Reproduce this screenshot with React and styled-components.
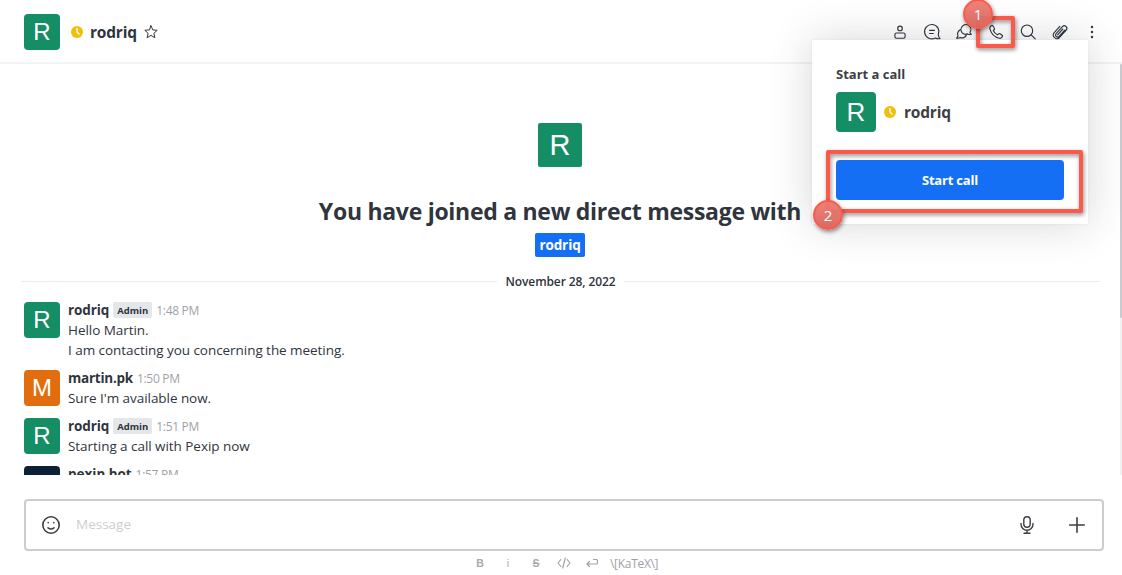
import React from 'react';
import styled, { createGlobalStyle } from 'styled-components';

const Global = createGlobalStyle`
  * { box-sizing: border-box; }
  body { margin: 0; background: #fff; overflow: hidden; }
`;

const Page = styled.div`
  position: relative;
  width: 1122px;
  height: 575px;
  overflow: hidden;
  display: flex;
  flex-direction: column;
  background: #fff;
  color: #2f343d;
  font-family: "Open Sans", "Noto Sans", sans-serif;
  font-size: 14px;
  line-height: 20px;
  white-space: nowrap;
`;

const Text = styled.span`
  font-size: ${p => p.$size || 13.5}px;
  font-weight: ${p => p.$weight || 400};
  color: ${p => p.$color || 'inherit'};
  letter-spacing: ${p => p.$track || 0}px;
`;

const Header = styled.header`
  flex: none;
  height: 64px;
  padding: 2px 20px 0 24px;
  display: flex;
  align-items: center;
  border-bottom: 2px solid #f2f3f5;
`;

const Avatar = styled.div`
  flex: none;
  display: flex;
  align-items: center;
  justify-content: center;
  width: ${p => p.$size}px;
  height: ${p => p.$size}px;
  border-radius: ${p => p.$radius || 4}px;
  background: ${p => p.$bg || '#158d65'};
  color: #fff;
  font-family: "Liberation Sans", Arial, sans-serif;
  font-size: ${p => p.$font || 24}px;
  line-height: 1;
`;

const RoomTitle = styled.div`
  flex: 1;
  display: flex;
  align-items: center;
  margin-left: 11px;
  svg { flex: none; }
  ${Text} { margin: 0 7px; }
`;

const Actions = styled.nav`
  display: flex;
  gap: 12px;
`;

const Icon = styled.svg.attrs({ fill: 'none', strokeLinecap: 'round', strokeLinejoin: 'round' })`
  display: block;
  flex: none;
  width: ${p => p.$size || 20}px;
  height: ${p => p.$size || 20}px;
  stroke: ${p => p.$color || '#2f343d'};
  stroke-width: ${p => p.$stroke || 1.15};
`;

const Feed = styled.main`
  flex: none;
  height: 411px;
  display: flex;
  overflow: hidden;
`;

const FeedContent = styled.div`
  width: 1120px;
  height: 411px;
  overflow: hidden;
`;

const Scrollbar = styled.div`
  width: 2px;
  background: #f1f1f1;
  &::before { content: ""; display: block; height: 254px; background: #c9cbcf; border-radius: 1px; }
`;

const Intro = styled.section`
  display: flex;
  flex-direction: column;
  align-items: center;
  padding-top: 59px;
`;

const IntroTitle = styled.h2`
  margin: 28px 0 0;
  line-height: 32px;
  font-size: 24px;
`;

const Mention = styled.div`
  margin-top: 6px;
  height: 24px;
  width: 50px;
  display: flex;
  align-items: center;
  justify-content: center;
  border-radius: 2px;
  background: #156ff5;
  color: #fff;
`;

const DateDivider = styled.div`
  display: flex;
  align-items: center;
  justify-content: center;
  gap: 8px;
  height: 20px;
  margin: 14px 20px 9px 21px;
  &::before, &::after { content: ""; flex: 1; height: 1px; background: #ebecef; }
  ${Text} { width: 111px; text-align: center; padding-top: 2px; }
`;

const Message = styled.article`
  display: flex;
  align-items: flex-start;
  padding-left: 24px;
  margin-bottom: 8px;
  & > ${Avatar} { margin-top: 2px; }
`;

const MessageBody = styled.div`
  margin-left: 8px;
`;

const MessageHead = styled.div`
  display: flex;
  align-items: center;
  height: 20px;
  gap: 4px;
`;

const Time = styled(Text)`
  margin-top: 2px;
`;

const Line = styled.div`
  height: 20px;
`;

const Role = styled.span`
  display: flex;
  align-items: center;
  justify-content: center;
  height: 16px;
  width: 39px;
  border-radius: 2px;
  background: #e4e7ea;
  ${Text} { padding-top: 1px; }
`;

const Composer = styled.div`
  flex: none;
  display: flex;
  align-items: center;
  margin: 24px 18px 0 24px;
  height: 52px;
  border: 2px solid #cbced1;
  border-radius: 4px;
  padding: 0 15px;
  & > ${Text} { flex: 1; margin: 0 0 2px 15px; }
  & > svg:last-child { margin-left: 30px; }
`;

const Hints = styled.div`
  display: flex;
  align-items: center;
  height: 24px;
  padding-left: 472px;
  & > svg { margin-right: 12px; }
  & > ${Text} { margin-left: -2px; padding-top: 2px; }
`;

const Hint = styled.span`
  width: 16px;
  margin-right: 12px;
  text-align: center;
  font: ${p => p.$weight || 700} 10.5px "Liberation Sans", Arial, sans-serif;
  line-height: 16px;
  color: #a6aab0;
  text-decoration: ${p => (p.$strike ? 'line-through' : 'none')};
`;

const CallPopup = styled.aside`
  position: absolute;
  left: 812px;
  top: 40px;
  width: 276px;
  height: 184px;
  padding: 24px;
  display: flex;
  flex-direction: column;
  background: #fff;
  box-shadow: 0 0 40px rgba(47, 52, 61, 0.2), 0 0 2px rgba(47, 52, 61, 0.08);
`;

const Callee = styled.div`
  display: flex;
  align-items: center;
  margin: 8px 0 28px;
  svg { margin: 0 8px; }
`;

const CallButton = styled.button`
  height: 40px;
  border: 0;
  padding: 0;
  border-radius: 4px;
  background: #156ff5;
  color: #fff;
  font-family: inherit;
`;

const Highlight = styled.div`
  position: absolute;
  left: ${p => p.$x}px;
  top: ${p => p.$y}px;
  width: ${p => p.$w}px;
  height: ${p => p.$h}px;
  border: 4px solid #fb5a4b;
  border-radius: 2px;
  filter: drop-shadow(1px 2px 2px rgba(0, 0, 0, 0.45));
`;

const Step = styled.div`
  position: absolute;
  left: ${p => p.$x}px;
  top: ${p => p.$y}px;
  width: 30px;
  height: 30px;
  display: flex;
  align-items: center;
  justify-content: center;
  padding-bottom: 1px;
  border: 2px solid #fb5a4b;
  border-radius: 50%;
  background: linear-gradient(rgba(236, 124, 115, 0.96), rgba(219, 101, 92, 0.96));
  color: #fff;
  font-size: 15px;
  box-shadow: 1px 2px 4px rgba(0, 0, 0, 0.45);
`;

const Away = () => (
  <Icon viewBox="0 0 12 12" $size={12} $color="#fff" $stroke={1.5}>
    <circle cx="6" cy="6" r="6" fill="#f3be08" stroke="none" />
    <path d="M6 2.8V6l2 2" />
  </Icon>
);

const RoomActions = () => (
  <Actions>
    <Icon viewBox="0 0 20 20">
      <circle cx="10" cy="6.400" r="2.300" />
      <path d="M6.500 11h7a1.600 1.600 0 0 1 1.600 1.600v2a1.600 1.600 0 0 1-1.600 1.600h-7a1.600 1.600 0 0 1-1.600-1.600v-2a1.600 1.600 0 0 1 1.600-1.600z" />
    </Icon>
    <Icon viewBox="0 0 20 20">
      <path d="M16.300 12.700a7.200 7.200 0 1 0-2.900 3.200c1.600.9 3.200 1.100 4.600.6-.9-.8-1.600-2.200-1.700-3.800z" />
      <path d="M7.500 8.300h5M7.500 11.500h3.800" />
    </Icon>
    <Icon viewBox="0 0 20 20">
      <path d="M8.300 10.800A4.900 4.900 0 1 1 15.900 10.400c.3.800.8 1.400 1.500 1.900-1.300.4-2.700.2-3.800-.4-2 .8-3.900.3-5.300-1.100z" />
      <path d="M6.500 7.600a4.700 4.700 0 0 0-2.500 6.300c-.2.900-.7 1.600-1.500 2.200 1.300.3 2.700.1 3.800-.5 2.700 1 5.500-.3 6.200-3.100" />
    </Icon>
    <Icon viewBox="0 0 20 20">
      <path d="M4.300 4.600l1-.9c.5-.4 1.100-.4 1.500.1L8.300 6c.4.5.3 1.100-.1 1.500l-.9.9c.8 1.800 2.300 3.400 4.200 4.400l1-.9c.4-.4 1-.4 1.500-.1l2.100 1.400c.5.4.6 1 .2 1.500l-.8 1c-.5.5-1.100.7-1.800.6C8.700 15.200 4.900 11.400 3.800 6.300c-.1-.7 0-1.200.5-1.700z" />
    </Icon>
    <Icon viewBox="0 0 20 20">
      <circle cx="9" cy="8.700" r="5.700" />
      <path d="M13.200 12.900l4 4" />
    </Icon>
    <Icon viewBox="0 0 20 20">
      <path d="M14.700 8.200l-5.600 6.200a2 2 0 0 1-3-2.700l6.300-7a2.500 2.500 0 0 1 3.800 3.300l-6.900 7.700a3.600 3.600 0 0 1-5.300-4.800l5.800-6.500M12.800 7l-5.200 5.800" />
    </Icon>
    <Icon viewBox="0 0 20 20">
      <g fill="#2f343d" stroke="none"><circle cx="10" cy="5" r="1.200" /><circle cx="10" cy="10" r="1.200" /><circle cx="10" cy="15" r="1.200" /></g>
    </Icon>
  </Actions>
);

const messages = [
  { name: 'rodriq', track: -0.1, admin: true, time: '1:48 PM', letter: 'R', lines: ['Hello Martin.', 'I am contacting you concerning the meeting.'] },
  { name: 'martin.pk', track: -0.25, time: '1:50 PM', letter: 'M', bg: '#e26d0e', lines: ["Sure I'm available now."] },
  { name: 'rodriq', track: -0.1, admin: true, time: '1:51 PM', letter: 'R', lines: ['Starting a call with Pexip now'] },
  { name: 'pexip.bot', track: 0, time: '1:57 PM', letter: '', bg: '#0a2136', lines: [] },
];

export default function App() {
  return (
    <Page>
      <Global />
      <Header>
        <Avatar $size={36}>R</Avatar>
        <RoomTitle>
          <Away />
          <Text $size={15.5} $weight={700} $track={-0.2}>rodriq</Text>
          <Icon viewBox="0 0 14 14" $size={14} $stroke={1}>
            <path d="M7 .8l1.800 4.100 4.400.4-3.300 3 1 4.400L7 10.400l-3.900 2.300 1-4.400-3.300-3 4.400-.4z" />
          </Icon>
        </RoomTitle>
        <RoomActions />
      </Header>
      <Feed>
        <FeedContent>
          <Intro>
            <Avatar $size={44} $font={29} $radius={2}>R</Avatar>
            <IntroTitle><Text $size={23} $weight={700} $track={-0.28}>You have joined a new direct message with</Text></IntroTitle>
            <Mention><Text $weight={700} $track={-0.1}>rodriq</Text></Mention>
          </Intro>
          <DateDivider><Text $size={12} $weight={600} $track={-0.1}>November 28, 2022</Text></DateDivider>
          {messages.map(m => (
            <Message key={m.time}>
              <Avatar $size={36} $bg={m.bg}>{m.letter}</Avatar>
              <MessageBody>
                <MessageHead>
                  <Text $weight={700} $track={m.track}>{m.name}</Text>
                  {m.admin && <Role><Text $size={9.5} $weight={700} $track={-0.05}>Admin</Text></Role>}
                  <Time $size={12} $track={-0.3} $color="#9ea2a8">{m.time}</Time>
                </MessageHead>
                {m.lines.map(line => <Line key={line}><Text $track={-0.05}>{line}</Text></Line>)}
              </MessageBody>
            </Message>
          ))}
        </FeedContent>
        <Scrollbar />
      </Feed>
      <Composer>
        <Icon viewBox="0 0 20 20" $color="#3c3f44" $stroke={1.600}>
          <circle cx="10" cy="10" r="8.200" />
          <path d="M7 12.800c1.700 1.300 4.300 1.300 6 0M7.200 7.500v.2M12.800 7.500v.2" />
        </Icon>
        <Text $color="#cbced1">Message</Text>
        <Icon viewBox="0 0 20 20" $color="#3c3f44" $stroke={1.400}>
          <rect x="6.800" y="1.700" width="6.400" height="10.600" rx="3.200" />
          <path d="M4 8.500v.8a6 6 0 0 0 12 0v-.8M10 15.300v3M7 18.300h6" />
        </Icon>
        <Icon viewBox="0 0 20 20" $color="#3c3f44" $stroke={1.600}>
          <path d="M10 2.700v14.600M2.700 10h14.600" />
        </Icon>
      </Composer>
      <Hints>
        <Hint>B</Hint>
        <Hint $weight={400}>i</Hint>
        <Hint $strike>S</Hint>
        <Icon viewBox="0 0 16 16" $size={16} $color="#9ea2a8" $stroke={1.200}>
          <path d="M4.800 4.500L2 8l2.800 3.500M11.200 4.500L14 8l-2.800 3.500M9.300 3L6.700 13" />
        </Icon>
        <Icon viewBox="0 0 16 16" $size={16} $color="#9ea2a8" $stroke={1.200}>
          <path d="M5.500 6.500L3 9l2.500 2.500M3 9h9.500c.6 0 1-.4 1-1V5.500c0-.6-.4-1-1-1H9.500" />
        </Icon>
        <Text $size={12} $track={-0.3} $color="#9ea2a8">{'\\[KaTeX\\]'}</Text>
      </Hints>

      <CallPopup>
        <Text $weight={700} $size={13} $color="#3c3f44">Start a call</Text>
        <Callee>
          <Avatar $size={40} $font={26}>R</Avatar>
          <Away />
          <Text $size={15.5} $weight={700} $track={-0.2} $color="#3c3f44">rodriq</Text>
        </Callee>
        <CallButton><Text $weight={700} $size={13} $track={-0.2}>Start call</Text></CallButton>
      </CallPopup>
      <Highlight $x={976} $y={16} $w={39} $h={32} />
      <Highlight $x={826} $y={150} $w={257} $h={63} />
      <Step $x={963} $y={-1}>1</Step>
      <Step $x={813} $y={200}>2</Step>
    </Page>
  );
}
